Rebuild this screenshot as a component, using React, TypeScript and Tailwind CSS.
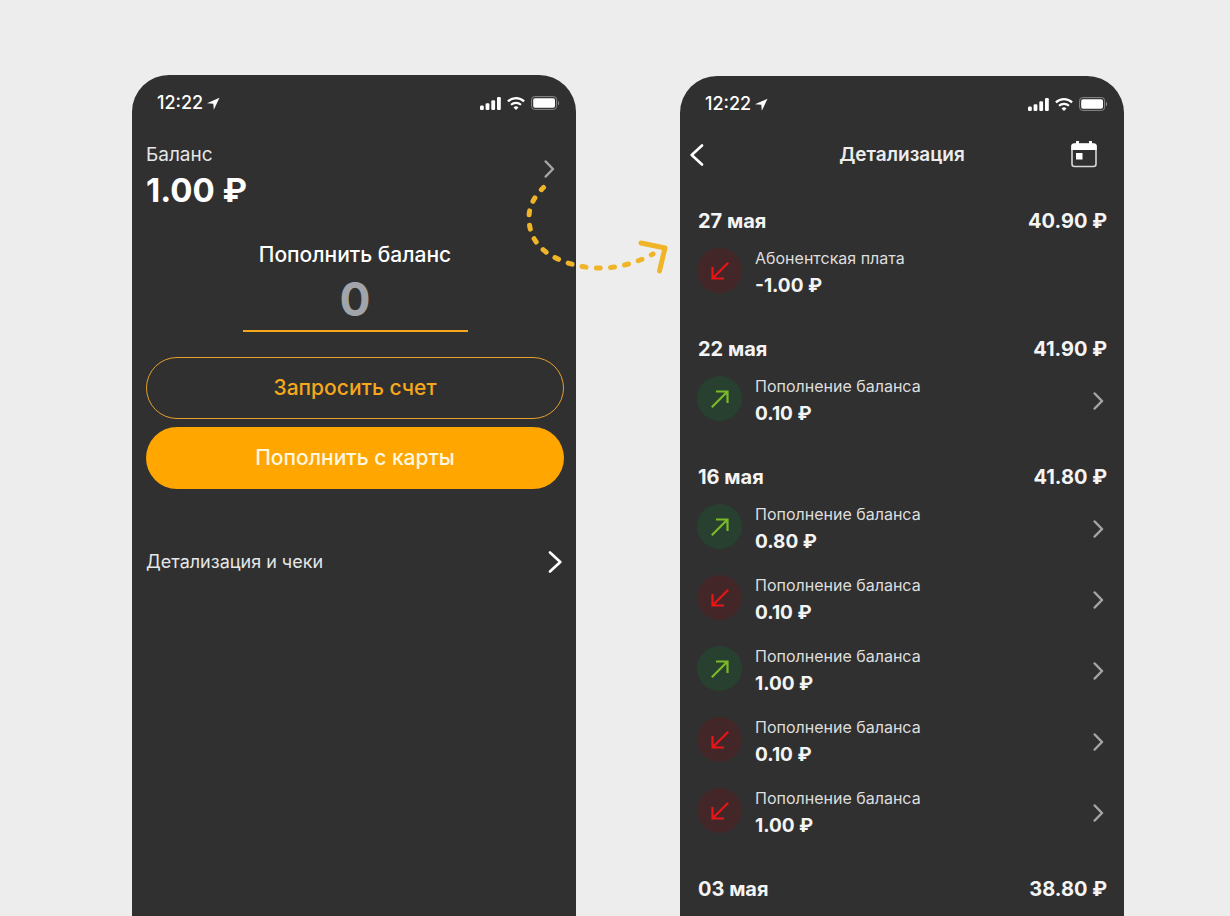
interface Operation {
  title: string;
  amount: string;
  income: boolean;
  hasDetails?: boolean;
}

interface Day {
  date: string;
  balance: string;
  operations: Operation[];
}

const days: Day[] = [
  {
    date: "27 мая",
    balance: "40.90 ₽",
    operations: [{ title: "Абонентская плата", amount: "-1.00 ₽", income: false }],
  },
  {
    date: "22 мая",
    balance: "41.90 ₽",
    operations: [{ title: "Пополнение баланса", amount: "0.10 ₽", income: true, hasDetails: true }],
  },
  {
    date: "16 мая",
    balance: "41.80 ₽",
    operations: [
      { title: "Пополнение баланса", amount: "0.80 ₽", income: true, hasDetails: true },
      { title: "Пополнение баланса", amount: "0.10 ₽", income: false, hasDetails: true },
      { title: "Пополнение баланса", amount: "1.00 ₽", income: true, hasDetails: true },
      { title: "Пополнение баланса", amount: "0.10 ₽", income: false, hasDetails: true },
      { title: "Пополнение баланса", amount: "1.00 ₽", income: false, hasDetails: true },
    ],
  },
  { date: "03 мая", balance: "38.80 ₽", operations: [] },
];

function StatusBar() {
  return (
    <div className="flex h-6 items-center justify-between pr-4 pl-[25px]">
      <div className="flex items-center gap-1 text-lg font-medium">
        12:22
        <svg width="13" height="13" viewBox="0 0 13 13" fill="currentColor" aria-hidden="true">
          <path d="M12.5 .7 0 6.3l6.3.5.5 6z" />
        </svg>
      </div>
      <div className="flex items-center gap-[6px]">
        <svg width="22" height="13" viewBox="0 0 22 13" fill="currentColor" aria-hidden="true">
          <rect x="1" y="8.5" width="3.8" height="4.5" rx="1.2" />
          <rect x="6.6" y="6.2" width="3.8" height="6.8" rx="1.2" />
          <rect x="12.3" y="3.2" width="3.8" height="9.8" rx="1.2" />
          <rect x="18" y="0" width="3.8" height="13" rx="1.2" />
        </svg>
        <svg width="18" height="13" viewBox="0 0 18 13" fill="none" stroke="currentColor" aria-hidden="true">
          <path d="M.9 4.4a11.8 11.8 0 0 1 16.2 0" strokeWidth="2.2" />
          <path d="M4 7.8a7.4 7.4 0 0 1 10 0" strokeWidth="2.1" />
          <path d="M6.5 10.5a3.7 3.7 0 0 1 5 0L9 13z" fill="currentColor" stroke="none" />
        </svg>
        <svg width="29" height="14" viewBox="0 0 29 14" aria-hidden="true">
          <rect x=".6" y=".6" width="25" height="12.8" rx="3" fill="none" stroke="#8a8a8a" strokeWidth="1" />
          <rect x="2.2" y="2.2" width="21.8" height="9.6" rx="1.8" fill="currentColor" />
          <path d="M27 4.7c1.6.8 1.6 3.8 0 4.6z" fill="#8a8a8a" />
        </svg>
      </div>
    </div>
  );
}

function Chevron({ large = false }: { large?: boolean }) {
  return large ? (
    <svg width="14" height="22" viewBox="0 0 14 22" fill="none" stroke="currentColor" strokeWidth="2.6" strokeLinecap="round" strokeLinejoin="round" aria-hidden="true">
      <path d="m2 1.5 10.3 9.5L2 20.5" />
    </svg>
  ) : (
    <svg width="11" height="18" viewBox="0 0 11 18" fill="none" stroke="currentColor" strokeWidth="2.5" strokeLinecap="round" strokeLinejoin="round" aria-hidden="true">
      <path d="m1.7 1.5 7.3 7.5-7.3 7.5" />
    </svg>
  );
}

function DirectionIcon({ income }: { income: boolean }) {
  return (
    <span
      className={`flex size-[45px] shrink-0 items-center justify-center rounded-full ${
        income ? "bg-[#28402f] text-[#7cb928]" : "bg-[#432728] text-[#e81416]"
      }`}
    >
      <svg width="18" height="18" viewBox="0 0 18 18" fill="none" stroke="currentColor" strokeWidth="2.2" aria-hidden="true">
        {income ? <path d="M.8 17.200 16.500 1.500M5 1.500h11.500V13" /> : <path d="M17.200.8 1.500 16.500M1.500 5v11.500H13" />}
      </svg>
    </span>
  );
}

function OperationRow({ operation }: { operation: Operation }) {
  return (
    <li className="flex h-[71px] items-center">
      <DirectionIcon income={operation.income} />
      <div className="ml-[13px] flex-1 pt-[2px]">
        <p className="text-base leading-[27px] text-[#dedede]">{operation.title}</p>
        <p className="text-[19px] leading-[27px] font-bold text-[#f4f4f4]">{operation.amount}</p>
      </div>
      {operation.hasDetails && (
        <button type="button" aria-label="Подробнее" className="mt-1 mr-[3px] text-[#a5a5a8]">
          <Chevron />
        </button>
      )}
    </li>
  );
}

function BalanceScreen() {
  return (
    <section className="relative min-w-0 flex-1 rounded-t-[37px] bg-[#303030] pt-4">
      <StatusBar />
      <div className="pr-3 pl-[14px]">
        <div className="mt-6 flex items-center justify-between">
          <div>
            <p className="text-[19px] leading-8 text-[#e6e6e6]">Баланс</p>
            <p className="text-[33px] leading-[38px] font-bold">1.00 ₽</p>
          </div>
          <button type="button" aria-label="Открыть баланс" className="mr-[9px] mb-[11px] text-[#a5a5a8]">
            <Chevron />
          </button>
        </div>

        <div className="mx-auto mt-8 flex w-[225px] flex-col text-center">
          <label htmlFor="amount" className="text-[21px] leading-7 font-medium whitespace-nowrap">
            Пополнить баланс
          </label>
          <input
            id="amount"
            inputMode="numeric"
            placeholder="0"
            className="h-[63px] w-full border-b-2 border-[#f5a81c] bg-transparent text-center text-[46px] font-bold outline-none placeholder:text-[#a1a5aa]"
          />
        </div>

        <div className="mt-[25px] flex flex-col gap-2 text-[21px] font-medium">
          <button type="button" className="h-[62px] rounded-full border border-[#e5a02a] text-[#f5a81c]">
            Запросить счет
          </button>
          <button type="button" className="h-[62px] rounded-full bg-[#ffa600] text-[#fff8e0]">
            Пополнить с карты
          </button>
        </div>

        <a href="#details" className="mt-[59px] mr-[2px] flex h-7 items-center justify-between text-lg text-[#e6e6e6]">
          Детализация и чеки
          <span className="text-white">
            <Chevron large />
          </span>
        </a>
      </div>

      {/* Dashed pointer to the details screen */}
      <svg
        width="150"
        height="100"
        viewBox="0 0 150 100"
        fill="none"
        stroke="#efb428"
        strokeWidth="5"
        strokeLinecap="round"
        strokeLinejoin="round"
        aria-hidden="true"
        className="absolute top-[105px] left-full z-10 -ml-14"
      >
        <path d="M23.500 7.500C12 19 9 28 9 38c0 23 15 37 39 45 28 9 57 6 85-9" strokeDasharray="4 10.3" strokeDashoffset="1" />
        <path d="m121 63 24 5-5.500 23" />
      </svg>
    </section>
  );
}

function DetailsScreen() {
  return (
    <section id="details" className="mt-px min-w-0 flex-1 rounded-t-[37px] bg-[#303030] pt-4">
      <StatusBar />
      <header className="mt-[23px] grid h-8 grid-cols-[1fr_auto_1fr] items-center px-[27px]">
        <button type="button" aria-label="Назад" className="-ml-[17px] w-[26px]">
          <span className="block w-[14px] rotate-180">
            <Chevron large />
          </span>
        </button>
        <h1 className="text-[19px] font-semibold text-[#ececec]">Детализация</h1>
        <button type="button" aria-label="Выбрать период" className="justify-self-end">
          <svg width="26" height="28" viewBox="0 0 26 28" fill="none" aria-hidden="true">
            <rect x="1" y="3" width="24" height="22.500" rx="2.500" stroke="#d8d8d8" strokeWidth="1.600" />
            <path d="M.3 5.500A3 3 0 0 1 3.300 2.500h19.400a3 3 0 0 1 3 3V9H.3zM5 0h3V4H5zM18 0h3V4h-3zM5 12h6.500v6.500H5z" fill="#fff" />
          </svg>
        </button>
      </header>

      <div className="mt-9 flex flex-col gap-[29px] px-[17px]">
        {days.map((day) => (
          <section key={day.date}>
            <h2 className="flex justify-between pl-px text-xl leading-7 font-bold text-[#f4f4f4]">
              <span>{day.date}</span>
              <span>{day.balance}</span>
            </h2>
            <ul>
              {day.operations.map((operation, index) => (
                <OperationRow key={index} operation={operation} />
              ))}
            </ul>
          </section>
        ))}
      </div>
    </section>
  );
}

export default function App() {
  return (
    <main className="flex min-h-screen gap-[104px] bg-[#ededed] pt-[75px] pr-[106px] pl-[132px] font-[Inter,sans-serif] text-white">
      <BalanceScreen />
      <DetailsScreen />
    </main>
  );
}
